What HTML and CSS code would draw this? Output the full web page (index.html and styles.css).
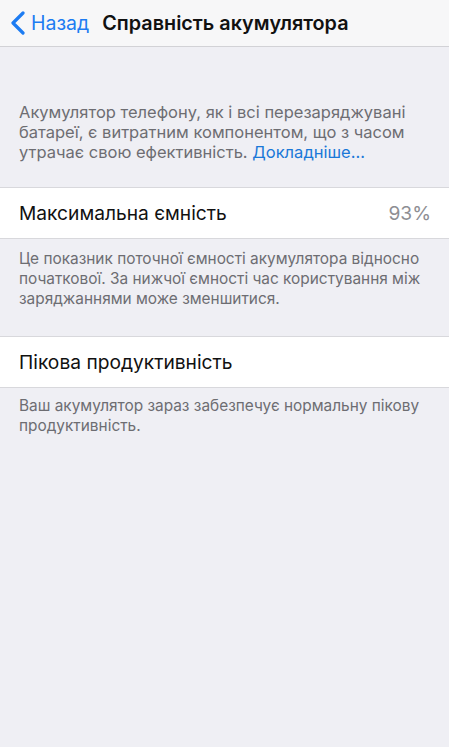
FILE: index.html
```html
<!DOCTYPE html>
<html lang="uk">
<head>
<meta charset="utf-8">
<link rel="stylesheet" href="styles.css">
</head>
<body>
<header class="nav">
  <a class="back">
    <svg class="chev" width="16" height="24" viewBox="0 0 16 24"><path d="M13 2 L3 12 L13 22" fill="none" stroke="#1d7cf2" stroke-width="3.2" stroke-linecap="round" stroke-linejoin="round"/></svg>
    <span class="back-text">Назад</span>
  </a>
  <h1 class="title">Справність акумулятора</h1>
</header>
<main>
  <p class="note first">Акумулятор телефону, як і всі перезаряджувані батареї, є витратним компонентом, що з часом утрачає свою ефективність. <span class="link">Докладніше...</span></p>
  <div class="row"><span class="label">Максимальна ємність</span><span class="value">93%</span></div>
  <p class="note second">Це показник поточної ємності акумулятора відносно початкової. За нижчої ємності час користування між заряджаннями може зменшитися.</p>
  <div class="row"><span class="label">Пікова продуктивність</span></div>
  <p class="note third">Ваш акумулятор зараз забезпечує нормальну пікову продуктивність.</p>
</main>
</body>
</html>
```
FILE: styles.css
```css
* { box-sizing: border-box; }
html, body { margin: 0; padding: 0; }
body {
  background: #efeff4;
  font-family: Inter, "Liberation Sans", Arial, sans-serif;
  width: 449px;
  height: 747px;
  overflow: hidden;
}
.nav {
  height: 47px;
  background: #f7f7f8;
  border-bottom: 1px solid #d2d2d6;
  display: flex;
  align-items: center;
  padding-left: 10px;
}
.back {
  display: flex;
  align-items: center;
  color: #1d7cf2;
}
.chev { display: block; margin-right: 5px; }
.back-text { font-size: 19.5px; }
.title {
  margin: 0 0 0 13px;
  font-size: 19.8px;
  font-weight: 600;
  color: #111;
}
.note {
  margin: 0;
  padding: 0 14px 0 19px;
  font-size: 15.4px;
  line-height: 20px;
  color: #6d6d72;
}
.note.first { font-size: 16.5px; padding-top: 55px; padding-bottom: 25px; }
.note.second { padding-top: 10px; padding-bottom: 27px; }
.note.third { padding-top: 8px; }
.link { color: #1a78d8; }
.row {
  height: 52px;
  background: #fff;
  border-top: 1px solid #d8d8dc;
  border-bottom: 1px solid #d8d8dc;
  display: flex;
  align-items: center;
  justify-content: space-between;
  padding: 0 18px 0 19px;
  font-size: 19.2px;
  color: #111;
}
.value { color: #8e8e93; }
```
